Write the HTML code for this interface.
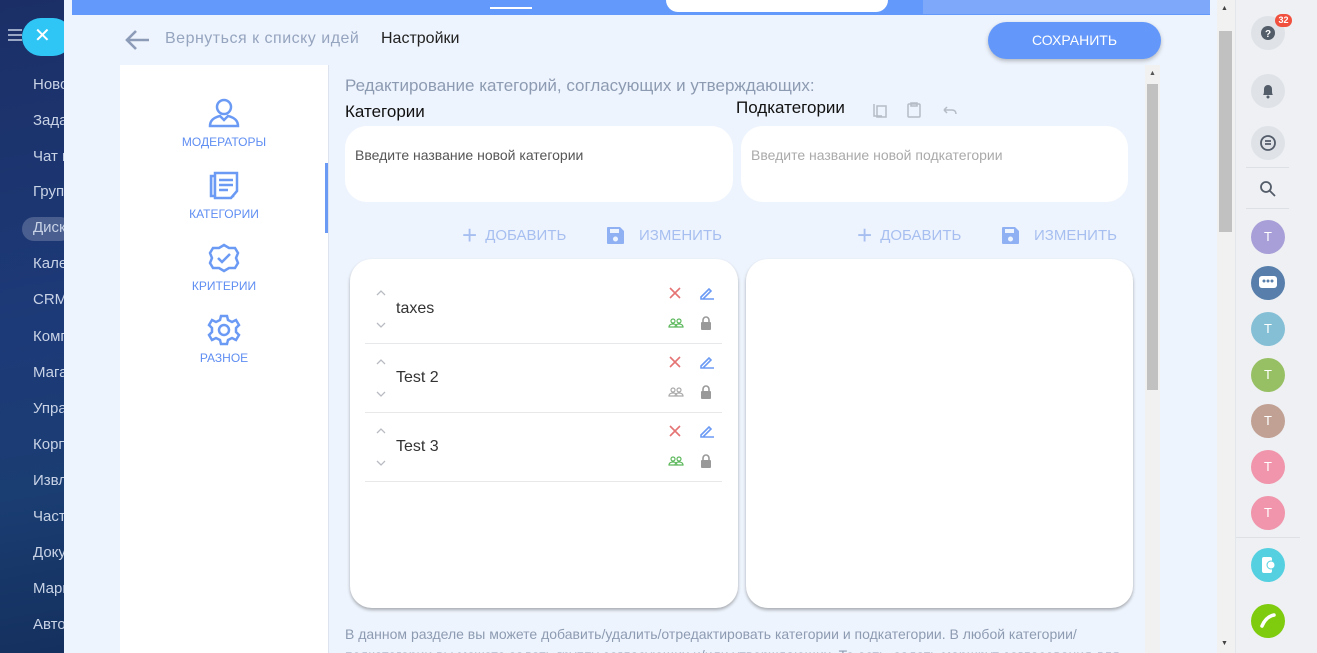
<!DOCTYPE html>
<html><head><meta charset="utf-8"><style>
*{box-sizing:border-box;margin:0;padding:0}
html,body{width:1317px;height:653px;overflow:hidden}
body{position:relative;font-family:"Liberation Sans",sans-serif;background:#eef4fd}
.nar{font-family:"Liberation Sans Narrow","Liberation Sans",sans-serif}
.abs{position:absolute}
#left{left:0;top:0;width:64px;height:653px;overflow:hidden;background:linear-gradient(170deg,#1b2f66 0%,#1d3a78 50%,#1a3d72 75%,#14305e 100%)}
#left .it{position:absolute;left:33px;color:#c9d3e6;font-size:15px;white-space:nowrap}
#main{left:64px;top:0;width:1153px;height:653px;background:#eef4fd}
.card{background:#fff;border-radius:22px}
.lbl{color:#5f8ef2;font-size:12px;text-align:center;width:208px;left:120px}
.btn{font-size:15px;color:#a7bff0;display:flex;align-items:center;gap:8px;height:20px}
.circ{position:absolute;left:1251px;width:34px;height:34px;border-radius:50%;color:#fff;font-size:13px;text-align:center;line-height:34px}
.grey{background:#dfe3e8}
.row{position:absolute;left:365px;width:357px;height:69px;border-bottom:1px solid #e6e8ea}
.row .t{position:absolute;left:31px;top:25px;font-size:16px;color:#333}
.row svg{position:absolute}
</style></head><body>
<div id="left" class="abs">
 <div class="abs" style="left:8px;top:29px;width:14px;height:2px;background:#9aa8c6;box-shadow:0 5px 0 #9aa8c6,0 10px 0 #9aa8c6"></div>
 <div class="abs" style="left:22px;top:18px;width:50px;height:38px;border-radius:19px;background:#2fc6f6;color:#fff;font-size:20px;line-height:37px;padding-left:12px">✕</div>
 <div class="abs" style="left:22px;top:217px;width:50px;height:24px;border-radius:12px;background:rgba(255,255,255,.2)"></div>
 <div class="it" style="top:76px">Новости</div><div class="it" style="top:112px">Задачи</div><div class="it" style="top:148px">Чат и звонки</div><div class="it" style="top:183px">Группы</div><div class="it" style="top:219px">Диск</div><div class="it" style="top:255px">Календарь</div><div class="it" style="top:291px">CRM</div><div class="it" style="top:328px">Компания</div><div class="it" style="top:364px">Магазин</div><div class="it" style="top:400px">Управление</div><div class="it" style="top:436px">Корпоратив</div><div class="it" style="top:472px">Извлечение</div><div class="it" style="top:508px">Частное</div><div class="it" style="top:544px">Документы</div><div class="it" style="top:580px">Маркет</div><div class="it" style="top:616px">Автоматизация</div>
</div>
<div id="main" class="abs">
 <div class="abs" style="left:8px;top:0;width:1138px;height:15px;background:#6399fb"></div>
 <div class="abs" style="left:859px;top:0;width:287px;height:14px;background:#7ea9fb"></div>
 <div class="abs" style="left:602px;top:0;width:222px;height:12px;background:#fff;border-radius:0 0 14px 14px"></div>
 <div class="abs" style="left:426px;top:7px;width:42px;height:2px;background:#fff"></div>
</div>
<svg class="abs" style="left:123px;top:28px" width="28" height="24" viewBox="0 0 28 24"><path d="M26 12H4M13 3L4 12l9 9" stroke="#8c9bb8" stroke-width="2.6" fill="none"/></svg>
<div class="abs" style="left:165px;top:30px;font-size:16px;color:#95a4bf;letter-spacing:.5px">Вернуться к списку идей</div>
<div class="abs" style="left:381px;top:30px;font-size:16px;color:#222">Настройки</div>
<div class="abs" style="left:988px;top:22px;width:173px;height:37px;border-radius:19px;background:#6398fa;box-shadow:0 2px 4px rgba(0,0,0,.25);color:#fff;font-size:14px;text-align:center;line-height:37px">СОХРАНИТЬ</div>

<div class="abs" style="left:120px;top:65px;width:208px;height:588px;background:#fff"></div>
<div class="abs" style="left:328px;top:65px;width:1px;height:588px;background:#dde4ef"></div>
<div class="abs" style="left:325px;top:163px;width:3px;height:70px;background:#6b9af5"></div>
<svg class="abs" style="left:208px;top:98px" width="32" height="30" viewBox="0 0 32 30" fill="none" stroke="#6b9af5" stroke-width="2.5"><circle cx="16" cy="9" r="7"/><path d="M2 28c0-7 6-9 10-10l4 4 4-4c4 1 10 3 10 10z"/></svg>
<div class="abs lbl" style="top:135px">МОДЕРАТОРЫ</div>
<svg class="abs" style="left:208px;top:170px" width="32" height="32" viewBox="0 0 32 32" fill="none" stroke="#6b9af5" stroke-width="2.5"><path d="M3 6h22v20H3z" fill="#dfe9fd"/><path d="M7 3h22v18l-6 7H7z" fill="#fff"/><path d="M11 10h14M11 15h14M11 20h9"/></svg>
<div class="abs lbl" style="top:207px">КАТЕГОРИИ</div>
<svg class="abs" style="left:208px;top:243px" width="32" height="30" viewBox="0 0 32 30" fill="none" stroke="#6b9af5" stroke-width="2.5"><path d="M16 2l5 3 6 0 3 5-2 5 2 5-3 5-6 0-5 3-5-3-6 0-3-5 2-5-2-5 3-5 6 0z"/><path d="M10 15l4 4 8-8"/></svg>
<div class="abs lbl" style="top:279px">КРИТЕРИИ</div>
<svg class="abs" style="left:207px;top:314px" width="34" height="32" viewBox="0 0 34 32" fill="none" stroke="#6b9af5" stroke-width="2.5"><path d="M14 2h6l1 4 4 2 4-2 3 5-3 3v4l3 3-3 5-4-2-4 2-1 4h-6l-1-4-4-2-4 2-3-5 3-3v-4l-3-3 3-5 4 2 4-2z"/><circle cx="17" cy="16" r="5"/></svg>
<div class="abs lbl" style="top:351px">РАЗНОЕ</div>

<div class="abs nar" style="left:345px;top:76px;font-size:17px;color:#8d9bb2">Редактирование категорий, согласующих и утверждающих:</div>
<div class="abs nar" style="left:345px;top:102px;font-size:17px;color:#111">Категории</div>
<div class="abs nar" style="left:736px;top:98px;font-size:17px;color:#111">Подкатегории</div>
<svg class="abs" style="left:872px;top:101px" width="90" height="18" viewBox="0 0 90 18" fill="none" stroke="#b5bcc6" stroke-width="1.5"><path d="M2 3v12h8"/><rect x="5" y="5" width="9" height="11"/><rect x="36" y="3" width="12" height="13" rx="1"/><path d="M39 2h6v3h-6z"/><path d="M72 9l3-3M72 9l3 3M72 9h8c3 0 4 2 4 4"/></svg>
<div class="abs card" style="left:345px;top:126px;width:388px;height:76px"></div>
<div class="abs nar" style="left:355px;top:147px;font-size:14px;color:#555">Введите название новой категории</div>
<div class="abs card" style="left:741px;top:126px;width:387px;height:76px"></div>
<div class="abs nar" style="left:751px;top:147px;font-size:14px;color:#aaa">Введите название новой подкатегории</div>

<div class="abs btn nar" style="left:462px;top:225px"><span style="font-size:26px;font-weight:300">+</span><span>ДОБАВИТЬ</span></div>
<div class="abs btn nar" style="left:857px;top:225px"><span style="font-size:26px;font-weight:300">+</span><span>ДОБАВИТЬ</span></div>
<svg class="abs" style="left:606px;top:226px" width="19" height="19" viewBox="0 0 19 19"><path d="M1 2a1 1 0 011-1h12l4 4v12a1 1 0 01-1 1H2a1 1 0 01-1-1z" fill="#8fb0f2"/><rect x="4" y="3" width="9" height="4" fill="#eef4fd"/><circle cx="9.5" cy="13" r="2.5" fill="#eef4fd"/></svg>
<div class="abs btn nar" style="left:639px;top:225px">ИЗМЕНИТЬ</div>
<svg class="abs" style="left:1001px;top:226px" width="19" height="19" viewBox="0 0 19 19"><path d="M1 2a1 1 0 011-1h12l4 4v12a1 1 0 01-1 1H2a1 1 0 01-1-1z" fill="#8fb0f2"/><rect x="4" y="3" width="9" height="4" fill="#eef4fd"/><circle cx="9.5" cy="13" r="2.5" fill="#eef4fd"/></svg>
<div class="abs btn nar" style="left:1034px;top:225px">ИЗМЕНИТЬ</div>

<div class="abs card" style="left:350px;top:259px;width:388px;height:349px;box-shadow:0 2px 3px rgba(0,0,0,.3)"></div>
<div class="abs card" style="left:746px;top:259px;width:387px;height:349px;box-shadow:0 2px 3px rgba(0,0,0,.3)"></div>

<div class="row" style="top:275px"><svg style="left:10px;top:14px" width="12" height="40" viewBox="0 0 12 40" fill="none" stroke="#b8bcc2" stroke-width="1.3"><path d="M2 6l4-4 4 4M2 34l4 4 4-4"/></svg><div class="t nar">taxes</div>
<svg style="left:304px;top:12px" width="12" height="12" viewBox="0 0 12 12" stroke="#e57373" stroke-width="1.6"><path d="M1 1l10 10M11 1L1 11"/></svg>
<svg style="left:334px;top:11px" width="15" height="14" viewBox="0 0 15 14" fill="none" stroke="#6b9af5" stroke-width="1.6"><path d="M2 11l8-8 2 2-8 8H2zM2 13h13"/></svg>
<svg style="left:303px;top:43px" width="16" height="10" viewBox="0 0 16 10" fill="none" stroke="#5cb85c" stroke-width="1.2"><circle cx="5" cy="3" r="2"/><circle cx="11" cy="3" r="2"/><path d="M1 9c0-2 2-3 4-3s4 1 4 3zM7 9c0-2 2-3 4-3s4 1 4 3z"/></svg>
<svg style="left:335px;top:40px" width="12" height="15" viewBox="0 0 12 15"><path d="M3 7V5a3 3 0 016 0v2" stroke="#999" stroke-width="1.6" fill="none"/><rect x="1" y="7" width="10" height="8" rx="1" fill="#999"/></svg></div>

<div class="row" style="top:344px"><svg style="left:10px;top:14px" width="12" height="40" viewBox="0 0 12 40" fill="none" stroke="#b8bcc2" stroke-width="1.3"><path d="M2 6l4-4 4 4M2 34l4 4 4-4"/></svg><div class="t nar">Test 2</div>
<svg style="left:304px;top:12px" width="12" height="12" viewBox="0 0 12 12" stroke="#e57373" stroke-width="1.6"><path d="M1 1l10 10M11 1L1 11"/></svg>
<svg style="left:334px;top:11px" width="15" height="14" viewBox="0 0 15 14" fill="none" stroke="#6b9af5" stroke-width="1.6"><path d="M2 11l8-8 2 2-8 8H2zM2 13h13"/></svg>
<svg style="left:303px;top:43px" width="16" height="10" viewBox="0 0 16 10" fill="none" stroke="#aaa" stroke-width="1.2"><circle cx="5" cy="3" r="2"/><circle cx="11" cy="3" r="2"/><path d="M1 9c0-2 2-3 4-3s4 1 4 3zM7 9c0-2 2-3 4-3s4 1 4 3z"/></svg>
<svg style="left:335px;top:40px" width="12" height="15" viewBox="0 0 12 15"><path d="M3 7V5a3 3 0 016 0v2" stroke="#999" stroke-width="1.6" fill="none"/><rect x="1" y="7" width="10" height="8" rx="1" fill="#999"/></svg></div>

<div class="row" style="top:413px"><svg style="left:10px;top:14px" width="12" height="40" viewBox="0 0 12 40" fill="none" stroke="#b8bcc2" stroke-width="1.3"><path d="M2 6l4-4 4 4M2 34l4 4 4-4"/></svg><div class="t nar">Test 3</div>
<svg style="left:304px;top:12px" width="12" height="12" viewBox="0 0 12 12" stroke="#e57373" stroke-width="1.6"><path d="M1 1l10 10M11 1L1 11"/></svg>
<svg style="left:334px;top:11px" width="15" height="14" viewBox="0 0 15 14" fill="none" stroke="#6b9af5" stroke-width="1.6"><path d="M2 11l8-8 2 2-8 8H2zM2 13h13"/></svg>
<svg style="left:303px;top:43px" width="16" height="10" viewBox="0 0 16 10" fill="none" stroke="#5cb85c" stroke-width="1.2"><circle cx="5" cy="3" r="2"/><circle cx="11" cy="3" r="2"/><path d="M1 9c0-2 2-3 4-3s4 1 4 3zM7 9c0-2 2-3 4-3s4 1 4 3z"/></svg>
<svg style="left:335px;top:40px" width="12" height="15" viewBox="0 0 12 15"><path d="M3 7V5a3 3 0 016 0v2" stroke="#999" stroke-width="1.6" fill="none"/><rect x="1" y="7" width="10" height="8" rx="1" fill="#999"/></svg></div>

<div class="abs nar" style="left:345px;top:624px;width:790px;font-size:14px;line-height:21px;color:#8d9bb2">В данном разделе вы можете добавить/удалить/отредактировать категории и подкатегории. В любой категории/ подкатегории вы можете задать группу согласующих и/или утверждающих. То есть, задать маршрут согласования для</div>

<div class="abs" style="left:1145px;top:65px;width:15px;height:588px;background:#f1f1f1"></div>
<div class="abs" style="left:1147px;top:84px;width:11px;height:306px;background:#c1c1c1"></div>
<div class="abs" style="left:1149px;top:70px;font-size:7px;color:#555">▲</div>

<div class="abs" style="left:1217px;top:0;width:18px;height:653px;background:#f1f1f1"></div>
<div class="abs" style="left:1219px;top:31px;width:13px;height:201px;background:#c1c1c1"></div>
<div class="abs" style="left:1221px;top:5px;font-size:7px;color:#444">▲</div>
<div class="abs" style="left:1221px;top:640px;font-size:7px;color:#444">▼</div>

<div class="abs" style="left:1235px;top:0;width:82px;height:653px;background:#eef0f3;border-left:1px solid #e3e6ea"></div>
<div class="circ grey" style="top:16px"><svg width="34" height="34" viewBox="0 0 34 34"><circle cx="17" cy="17" r="7" fill="#535c69"/><text x="17" y="21" font-size="10" fill="#fff" text-anchor="middle" font-family="Liberation Sans" font-weight="bold">?</text></svg></div>
<div class="abs" style="left:1275px;top:14px;width:17px;height:13px;border-radius:7px;background:#f0503d;color:#fff;font-size:9px;font-weight:bold;text-align:center;line-height:13px">32</div>
<div class="circ grey" style="top:74px"><svg width="34" height="34" viewBox="0 0 34 34"><path d="M12 21c1-1 1-3 1-6a4 4 0 018 0c0 3 0 5 1 6z" fill="#535c69"/><circle cx="17" cy="23" r="1.5" fill="#535c69"/></svg></div>
<div class="circ grey" style="top:126px"><svg width="34" height="34" viewBox="0 0 34 34" fill="none" stroke="#535c69" stroke-width="1.8"><circle cx="17" cy="17" r="7"/><path d="M14 15h6M14 18h6"/></svg></div>
<div class="abs" style="left:1246px;top:167px;width:43px;height:1px;background:#dde0e4"></div>
<svg class="abs" style="left:1258px;top:179px" width="20" height="20" viewBox="0 0 20 20" fill="none" stroke="#535c69" stroke-width="1.8"><circle cx="8" cy="8" r="5"/><path d="M12 12l5 5"/></svg>
<div class="abs" style="left:1246px;top:208px;width:43px;height:1px;background:#dde0e4"></div>
<div class="circ" style="top:220px;background:#a89fd8">T</div>
<div class="circ" style="top:266px;background:#587fab"><svg width="34" height="34" viewBox="0 0 34 34"><rect x="8" y="10" width="18" height="12" rx="3" fill="#fff"/><circle cx="13" cy="15" r="1.5" fill="#587fab"/><circle cx="17" cy="15" r="1.5" fill="#587fab"/><circle cx="21" cy="15" r="1.5" fill="#587fab"/></svg></div>
<div class="circ" style="top:312px;background:#85bfd6">T</div>
<div class="circ" style="top:358px;background:#97c064">T</div>
<div class="circ" style="top:404px;background:#c1a194">T</div>
<div class="circ" style="top:450px;background:#f095ab">T</div>
<div class="circ" style="top:496px;background:#f095ab">T</div>
<div class="abs" style="left:1236px;top:537px;width:64px;height:1px;background:#dde0e4"></div>
<div class="circ" style="top:548px;background:#55d0e0"><svg width="34" height="34" viewBox="0 0 34 34"><rect x="11" y="9" width="10" height="16" rx="2" fill="#fff"/><circle cx="20" cy="17" r="4" fill="#fff" stroke="#55d0e0"/></svg></div>
<div class="circ" style="top:604px;background:#7fcb0e"><svg width="34" height="34" viewBox="0 0 34 34"><path d="M11 22c3-7 7-10 12-11" stroke="#fff" stroke-width="3.5" fill="none" stroke-linecap="round"/></svg></div>
</body></html>
